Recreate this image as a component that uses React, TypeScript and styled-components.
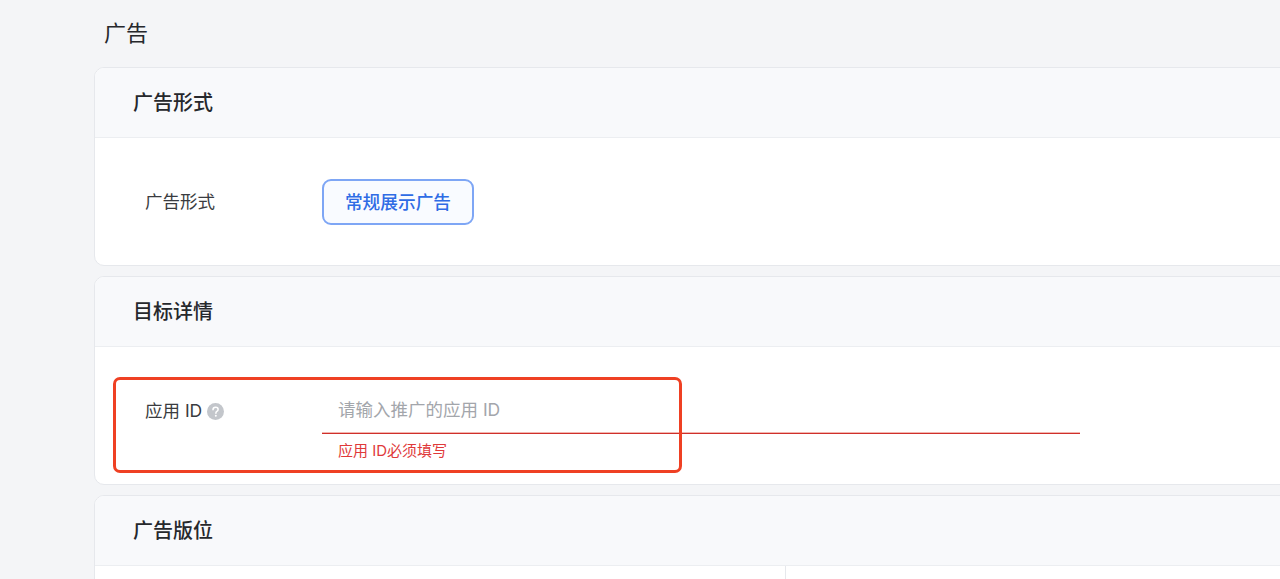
import React from 'react';
import styled, { createGlobalStyle } from 'styled-components';

const GlobalStyle = createGlobalStyle`
  html, body {
    margin: 0;
    padding: 0;
    height: 100%;
    overflow: hidden;
    background: #f4f5f7;
    font-family: Inter, "Noto Sans CJK SC", "Liberation Sans", sans-serif;
  }
`;

const Page = styled.div`
  width: 1280px;
  height: 579px;
  overflow: hidden;
  padding-left: 94px;
  box-sizing: border-box;
`;

const PageTitle = styled.h1`
  margin: 0;
  height: 67px;
  padding-left: 10px;
  box-sizing: border-box;
  font-size: 22px;
  line-height: 67px;
  font-weight: 400;
  color: #26282c;
`;

const Cards = styled.div`
  display: flex;
  flex-direction: column;
  gap: 10px;
  width: 1240px;
`;

const Card = styled.section<{ $height: number }>`
  background: #fff;
  border: 1px solid #e6e8ec;
  border-radius: 10px;
  box-sizing: border-box;
  overflow: hidden;
  height: ${(p) => p.$height}px;
`;

const CardHeader = styled.div`
  height: 70px;
  box-sizing: border-box;
  padding: 0 0 2px 38px;
  display: flex;
  align-items: center;
  background: #f8f9fb;
  border-bottom: 1px solid #eceef1;
  font-size: 20px;
  font-weight: 500;
  color: #26282c;
`;

const CardBody = styled.div`
  position: relative;
`;

const Row = styled.div<{ $top: number }>`
  display: flex;
  align-items: flex-start;
  padding: ${(p) => p.$top}px 0 0 50px;
`;

const Label = styled.div`
  width: 177px;
  height: 46px;
  display: flex;
  align-items: center;
  gap: 5px;
  font-size: 17.5px;
  line-height: 24px;
  color: #3a3c40;
`;

const FormatButton = styled.button`
  width: 152px;
  height: 46px;
  padding: 0 0 2px;
  border: 2px solid #7ea6f5;
  border-radius: 9px;
  background: #f9fbff;
  color: #2f6ce5;
  font-family: inherit;
  font-size: 17.7px;
  font-weight: 500;
`;

const Field = styled.div`
  width: 758px;
`;

const InputBox = styled.div`
  height: 46px;
  box-sizing: border-box;
  padding: 0 0 5px 16px;
  display: flex;
  align-items: center;
  border-bottom: 1px solid #cf2f2a;
  box-shadow: 0 -1px 0 #f2b6b0 inset;
  font-size: 17.5px;
  color: #a3a6ab;
`;

const ErrorText = styled.div`
  padding: 6px 0 0 16px;
  font-size: 15px;
  line-height: 22px;
  color: #e0393a;
`;

const Annotation = styled.div`
  position: absolute;
  left: 18px;
  top: 30px;
  width: 569px;
  height: 96px;
  box-sizing: border-box;
  border: 3.5px solid #ef4023;
  border-radius: 7px;
  pointer-events: none;
`;

const Columns = styled.div`
  display: flex;
  height: 40px;
`;

const Column = styled.div`
  width: 690px;
  border-right: 1px solid #e6e8ec;
`;

const HelpIcon = () => (
  <svg width="17" height="17" viewBox="0 0 17 17" aria-hidden="true">
    <circle cx="8.5" cy="8.5" r="8.5" fill="#c3c6cb" />
    <path
      d="M6 6.7c0-1.5 1.1-2.4 2.6-2.4 1.4 0 2.5.9 2.5 2.1 0 1-.6 1.5-1.3 2-.6.4-.9.8-.9 1.5v.3"
      fill="none"
      stroke="#fff"
      strokeWidth="1.5"
      strokeLinecap="round"
    />
    <circle cx="8.8" cy="12.7" r="1" fill="#fff" />
  </svg>
);

export default function App() {
  return (
    <Page>
      <GlobalStyle />
      <PageTitle>广告</PageTitle>
      <Cards>
        <Card $height={199}>
          <CardHeader>广告形式</CardHeader>
          <CardBody>
            <Row $top={41}>
              <Label>广告形式</Label>
              <FormatButton>常规展示广告</FormatButton>
            </Row>
          </CardBody>
        </Card>
        <Card $height={209}>
          <CardHeader>目标详情</CardHeader>
          <CardBody>
            <Row $top={41}>
              <Label>
                应用 ID
                <HelpIcon />
              </Label>
              <Field>
                <InputBox>请输入推广的应用 ID</InputBox>
                <ErrorText>应用 ID必须填写</ErrorText>
              </Field>
            </Row>
            <Annotation />
          </CardBody>
        </Card>
        <Card $height={200}>
          <CardHeader>广告版位</CardHeader>
          <Columns>
            <Column />
          </Columns>
        </Card>
      </Cards>
    </Page>
  );
}
